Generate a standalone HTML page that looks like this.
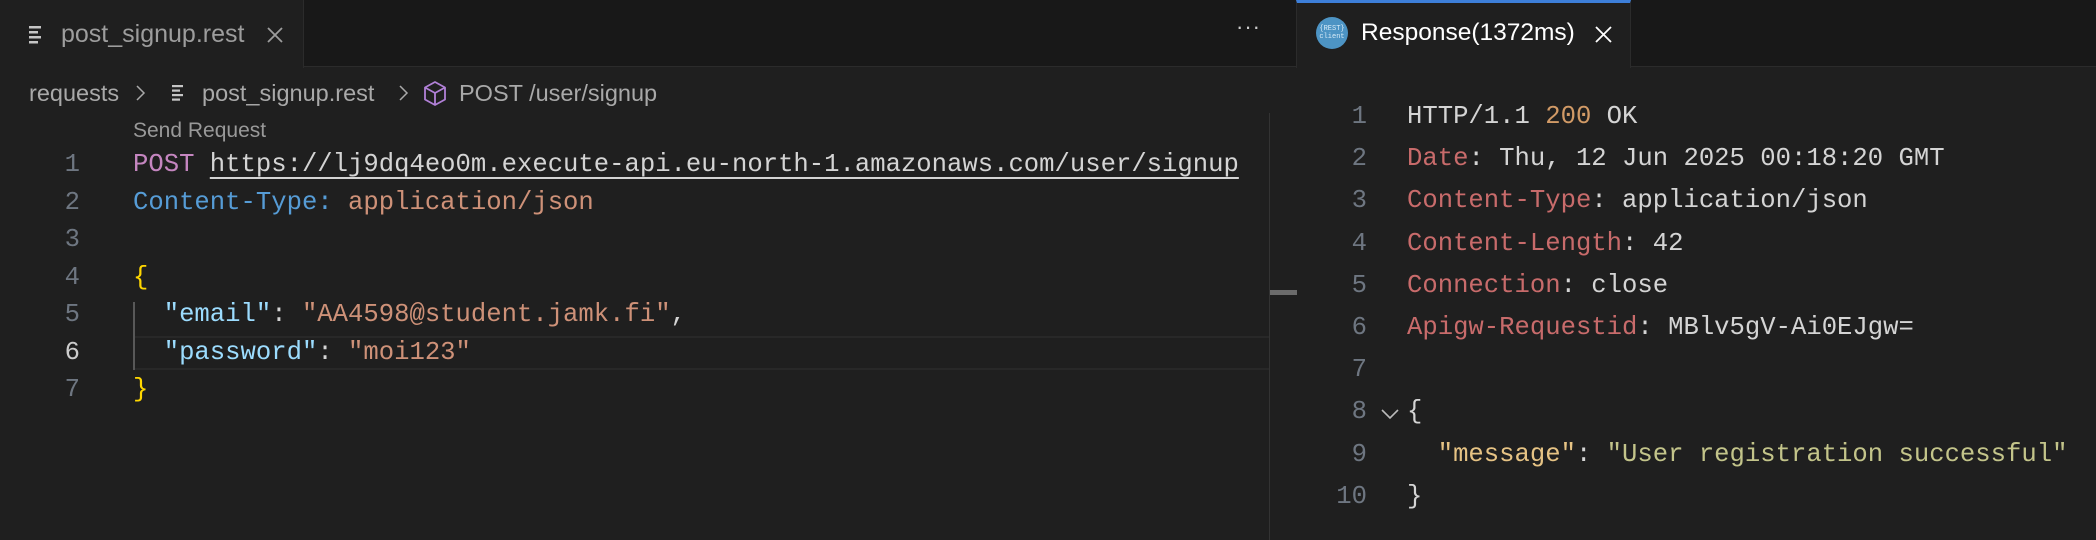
<!DOCTYPE html>
<html><head><meta charset="utf-8"><style>
*{margin:0;padding:0;box-sizing:border-box}
body{width:2096px;height:540px;background:#1f1f1f;position:relative;overflow:hidden;font-family:"Liberation Sans",sans-serif}
.a{position:absolute;white-space:pre}
.mono{font-family:"Liberation Mono",monospace;font-size:25.6px}
.ln{color:#6e7681;text-align:right;width:40px}
</style></head><body>
<!-- tab bar -->
<div class="a" style="left:0;top:0;width:2096px;height:67px;background:#181818;border-bottom:1px solid #2b2b2b"></div>
<div class="a" style="left:0;top:0;width:304px;height:68px;background:#1f1f1f;border-right:1px solid #2b2b2b"></div>
<svg class="a" style="left:29px;top:26px" width="20" height="18"><g fill="#c5c5c5"><rect x="0" y="0" width="12" height="2.5"/><rect x="0" y="5" width="9" height="2.5"/><rect x="0" y="10" width="12" height="2.5"/><rect x="0" y="15" width="9" height="2.5"/></g></svg>
<div class="a" style="left:61px;top:19px;font-size:25px;color:#9d9d9d;line-height:30px">post_signup.rest</div>
<svg class="a" style="left:266px;top:26px" width="18" height="18"><path d="M2 2L16 16M16 2L2 16" stroke="#9d9d9d" stroke-width="1.8"/></svg>
<div class="a" style="left:1236px;top:14px;font-size:22px;color:#cccccc;letter-spacing:1px">···</div>
<!-- response tab -->
<div class="a" style="left:1296px;top:0;width:335px;height:68px;background:#1f1f1f;border-top:3px solid #3d7fd9;border-right:1px solid #2b2b2b;border-left:1px solid #2b2b2b"></div>
<div class="a" style="left:1316px;top:17px;width:32px;height:32px;border-radius:50%;background:#4d94c4"></div>
<div class="a" style="left:1319px;top:25px;width:26px;font-size:7px;color:#d8ecf8;text-align:center;font-family:'Liberation Mono',monospace;line-height:8px">{REST}<br>client</div>
<div class="a" style="left:1361px;top:18px;font-size:24.5px;color:#ffffff;line-height:30px">Response(1372ms)</div>
<svg class="a" style="left:1594px;top:25px" width="19" height="19"><path d="M2 2L17 17M17 2L2 17" stroke="#ffffff" stroke-width="1.8"/></svg>
<!-- breadcrumb -->
<div class="a" style="left:29px;top:78px;font-size:23.5px;color:#a9a9a9;line-height:30px">requests</div>
<svg class="a" style="left:135px;top:84px" width="12" height="18"><path d="M2 2L9 9L2 16" stroke="#a9a9a9" stroke-width="1.5" fill="none"/></svg>
<svg class="a" style="left:172px;top:85px" width="16" height="16"><g fill="#c5c5c5"><rect x="0" y="0" width="11" height="2.2"/><rect x="0" y="4.5" width="8" height="2.2"/><rect x="0" y="9" width="11" height="2.2"/><rect x="0" y="13.5" width="8" height="2.2"/></g></svg>
<div class="a" style="left:202px;top:78px;font-size:23.5px;color:#a9a9a9;line-height:30px">post_signup.rest</div>
<svg class="a" style="left:398px;top:84px" width="12" height="18"><path d="M2 2L9 9L2 16" stroke="#a9a9a9" stroke-width="1.5" fill="none"/></svg>
<svg class="a" style="left:422px;top:80px" width="26" height="27"><path d="M13 2L23 7.5V19.5L13 25L3 19.5V7.5Z M3 7.5L13 13L23 7.5 M13 13V25" stroke="#b180d7" stroke-width="1.8" fill="none" stroke-linejoin="round"/></svg>
<div class="a" style="left:459px;top:78px;font-size:23.5px;color:#a9a9a9;line-height:30px">POST /user/signup</div>
<!-- left editor -->
<div class="a" style="left:133px;top:118px;font-size:21px;color:#999999;line-height:26px">Send Request</div>
<div class="a" style="left:133px;top:336px;width:1136px;height:34px;border-top:2px solid #282828;border-bottom:2px solid #282828"></div>
<div class="a" style="left:133px;top:302px;width:2px;height:68px;background:#585858"></div>
<div class="a" style="left:1269px;top:113px;width:1px;height:427px;background:#333"></div>
<div class="a" style="left:1270px;top:290px;width:27px;height:5px;background:#6b6b6b"></div>
<div class="mono" style="position:absolute;left:0;top:146px;line-height:37.5px">
<div class="a ln" style="left:40px;top:0">1</div>
<div class="a ln" style="left:40px;top:37.5px">2</div>
<div class="a ln" style="left:40px;top:75px">3</div>
<div class="a ln" style="left:40px;top:112.5px">4</div>
<div class="a ln" style="left:40px;top:150px">5</div>
<div class="a ln" style="left:40px;top:187.5px;color:#cccccc">6</div>
<div class="a ln" style="left:40px;top:225px">7</div>
<div class="a" style="left:133px;top:0"><span style="color:#c586c0">POST</span> <span style="color:#d4d4d4;text-decoration:underline;text-underline-offset:6px">https://lj9dq4eo0m.execute-api.eu-north-1.amazonaws.com/user/signup</span></div>
<div class="a" style="left:133px;top:37.5px"><span style="color:#569cd6">Content-Type:</span> <span style="color:#ce9178">application/json</span></div>
<div class="a" style="left:133px;top:112.5px;color:#ffd700">{</div>
<div class="a" style="left:133px;top:150px">  <span style="color:#9cdcfe">"email"</span><span style="color:#d4d4d4">: </span><span style="color:#ce9178">"AA4598@student.jamk.fi"</span><span style="color:#d4d4d4">,</span></div>
<div class="a" style="left:133px;top:187.5px">  <span style="color:#9cdcfe">"password"</span><span style="color:#d4d4d4">: </span><span style="color:#ce9178">"moi123"</span></div>
<div class="a" style="left:133px;top:225px;color:#ffd700">}</div>
</div>
<!-- right editor -->
<div class="mono" style="position:absolute;left:0;top:96px;line-height:42.2px">
<div class="a ln" style="left:1327px;top:0">1</div>
<div class="a ln" style="left:1327px;top:42.2px">2</div>
<div class="a ln" style="left:1327px;top:84.4px">3</div>
<div class="a ln" style="left:1327px;top:126.6px">4</div>
<div class="a ln" style="left:1327px;top:168.8px">5</div>
<div class="a ln" style="left:1327px;top:211px">6</div>
<div class="a ln" style="left:1327px;top:253.2px">7</div>
<div class="a ln" style="left:1327px;top:295.4px">8</div>
<div class="a ln" style="left:1327px;top:337.6px">9</div>
<div class="a ln" style="left:1327px;top:379.8px">10</div>
<svg class="a" style="left:1380px;top:312px" width="20" height="12"><path d="M2 2L10 10L18 2" stroke="#bbbbbb" stroke-width="1.6" fill="none"/></svg>
<div class="a" style="left:1407px;top:0;color:#d4d4d4">HTTP/1.1 <span style="color:#d19a66">200</span> OK</div>
<div class="a" style="left:1407px;top:42.2px;color:#d4d4d4"><span style="color:#c86b6b">Date</span>: Thu, 12 Jun 2025 00:18:20 GMT</div>
<div class="a" style="left:1407px;top:84.4px;color:#d4d4d4"><span style="color:#c86b6b">Content-Type</span>: application/json</div>
<div class="a" style="left:1407px;top:126.6px;color:#d4d4d4"><span style="color:#c86b6b">Content-Length</span>: 42</div>
<div class="a" style="left:1407px;top:168.8px;color:#d4d4d4"><span style="color:#c86b6b">Connection</span>: close</div>
<div class="a" style="left:1407px;top:211px;color:#d4d4d4"><span style="color:#c86b6b">Apigw-Requestid</span>: MBlv5gV-Ai0EJgw=</div>
<div class="a" style="left:1407px;top:295.4px;color:#d4d4d4">{</div>
<div class="a" style="left:1407px;top:337.6px;color:#d4d4d4">  <span style="color:#e6c384">"message"</span>: <span style="color:#c3c48a">"User registration successful"</span></div>
<div class="a" style="left:1407px;top:379.8px;color:#d4d4d4">}</div>
</div>
</body></html>
